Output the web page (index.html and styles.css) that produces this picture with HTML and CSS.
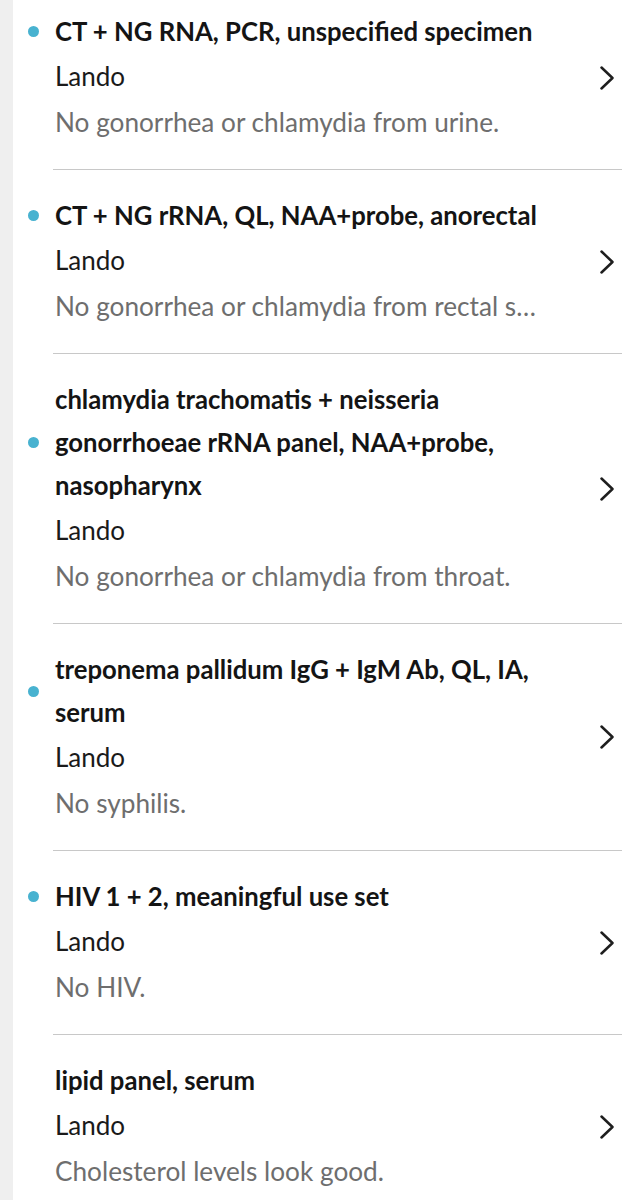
FILE: index.html
```html
<!DOCTYPE html>
<html lang="en">
<head>
<meta charset="utf-8">
<title>Test results</title>
<link rel="stylesheet" href="styles.css">
</head>
<body>
<main class="panel">
  <ul class="results">
    <li class="result">
      <span class="dot"></span>
      <h3 class="title">CT + NG RNA, PCR, unspecified specimen</h3>
      <p class="source">Lando</p>
      <p class="summary">No gonorrhea or chlamydia from urine.</p>
      <svg class="chev" viewBox="0 0 16 24" aria-hidden="true"><path d="M2.5 1.5 L13.5 12 L2.5 22.5"/></svg>
    </li>
    <li class="result">
      <span class="dot"></span>
      <h3 class="title">CT + NG rRNA, QL, NAA+probe, anorectal</h3>
      <p class="source">Lando</p>
      <p class="summary">No gonorrhea or chlamydia from rectal swab.</p>
      <svg class="chev" viewBox="0 0 16 24" aria-hidden="true"><path d="M2.5 1.5 L13.5 12 L2.5 22.5"/></svg>
    </li>
    <li class="result">
      <span class="dot"></span>
      <h3 class="title">chlamydia trachomatis + neisseria gonorrhoeae rRNA panel, NAA+probe, nasopharynx</h3>
      <p class="source">Lando</p>
      <p class="summary">No gonorrhea or chlamydia from throat.</p>
      <svg class="chev" viewBox="0 0 16 24" aria-hidden="true"><path d="M2.5 1.5 L13.5 12 L2.5 22.5"/></svg>
    </li>
    <li class="result">
      <span class="dot"></span>
      <h3 class="title">treponema pallidum IgG + IgM Ab, QL, IA, serum</h3>
      <p class="source">Lando</p>
      <p class="summary">No syphilis.</p>
      <svg class="chev" viewBox="0 0 16 24" aria-hidden="true"><path d="M2.5 1.5 L13.5 12 L2.5 22.5"/></svg>
    </li>
    <li class="result">
      <span class="dot"></span>
      <h3 class="title">HIV 1 + 2, meaningful use set</h3>
      <p class="source">Lando</p>
      <p class="summary">No HIV.</p>
      <svg class="chev" viewBox="0 0 16 24" aria-hidden="true"><path d="M2.5 1.5 L13.5 12 L2.5 22.5"/></svg>
    </li>
    <li class="result">
      <h3 class="title">lipid panel, serum</h3>
      <p class="source">Lando</p>
      <p class="summary">Cholesterol levels look good.</p>
      <svg class="chev" viewBox="0 0 16 24" aria-hidden="true"><path d="M2.5 1.5 L13.5 12 L2.5 22.5"/></svg>
    </li>
  </ul>
</main>
</body>
</html>
```

FILE: styles.css
```css
html, body {
  margin: 0;
  padding: 0;
}

body {
  background: #efefef;
  font-family: Lato, "Source Sans Pro", "Noto Sans", sans-serif;
  color: #1c1c1c;
  overflow: hidden;
}

.panel {
  margin-left: 13px;
  background: #ffffff;
  min-height: 1200px;
}

.results {
  list-style: none;
  margin: -14px 0 0 0;
  padding: 0;
}

.result {
  display: grid;
  grid-template-columns: 40px 1fr 73px;
  grid-template-rows: auto auto auto;
  padding-top: 24px;
}

.result::after {
  content: "";
  grid-column: 2 / 4;
  grid-row: 4;
  height: 1px;
  margin-top: 24px;
  background: #c8c8c8;
}

.dot {
  grid-column: 1;
  grid-row: 1;
  align-self: center;
  justify-self: center;
  width: 11px;
  height: 11px;
  border-radius: 50%;
  background: #48b2d0;
}

.title {
  grid-column: 2;
  grid-row: 1;
  margin: 0;
  padding-left: 2px;
  font-size: 25.7px;
  font-weight: 700;
  line-height: 43px;
  color: #141414;
}

.source {
  grid-column: 2;
  grid-row: 2;
  margin: 0;
  padding-left: 2px;
  font-size: 26px;
  line-height: 46px;
  color: #1a1a1a;
}

.summary {
  grid-column: 2;
  grid-row: 3;
  margin: 0;
  padding-left: 2px;
  font-size: 26.2px;
  line-height: 46px;
  color: #6e6e6e;
  white-space: nowrap;
  overflow: hidden;
  text-overflow: ellipsis;
}

.chev {
  grid-column: 3;
  grid-row: 1 / 4;
  align-self: center;
  justify-self: end;
  margin-right: 7px;
  width: 16px;
  height: 24px;
  fill: none;
  stroke: #1e1e1e;
  stroke-width: 2.5;
  stroke-linecap: round;
  stroke-linejoin: round;
}
```
